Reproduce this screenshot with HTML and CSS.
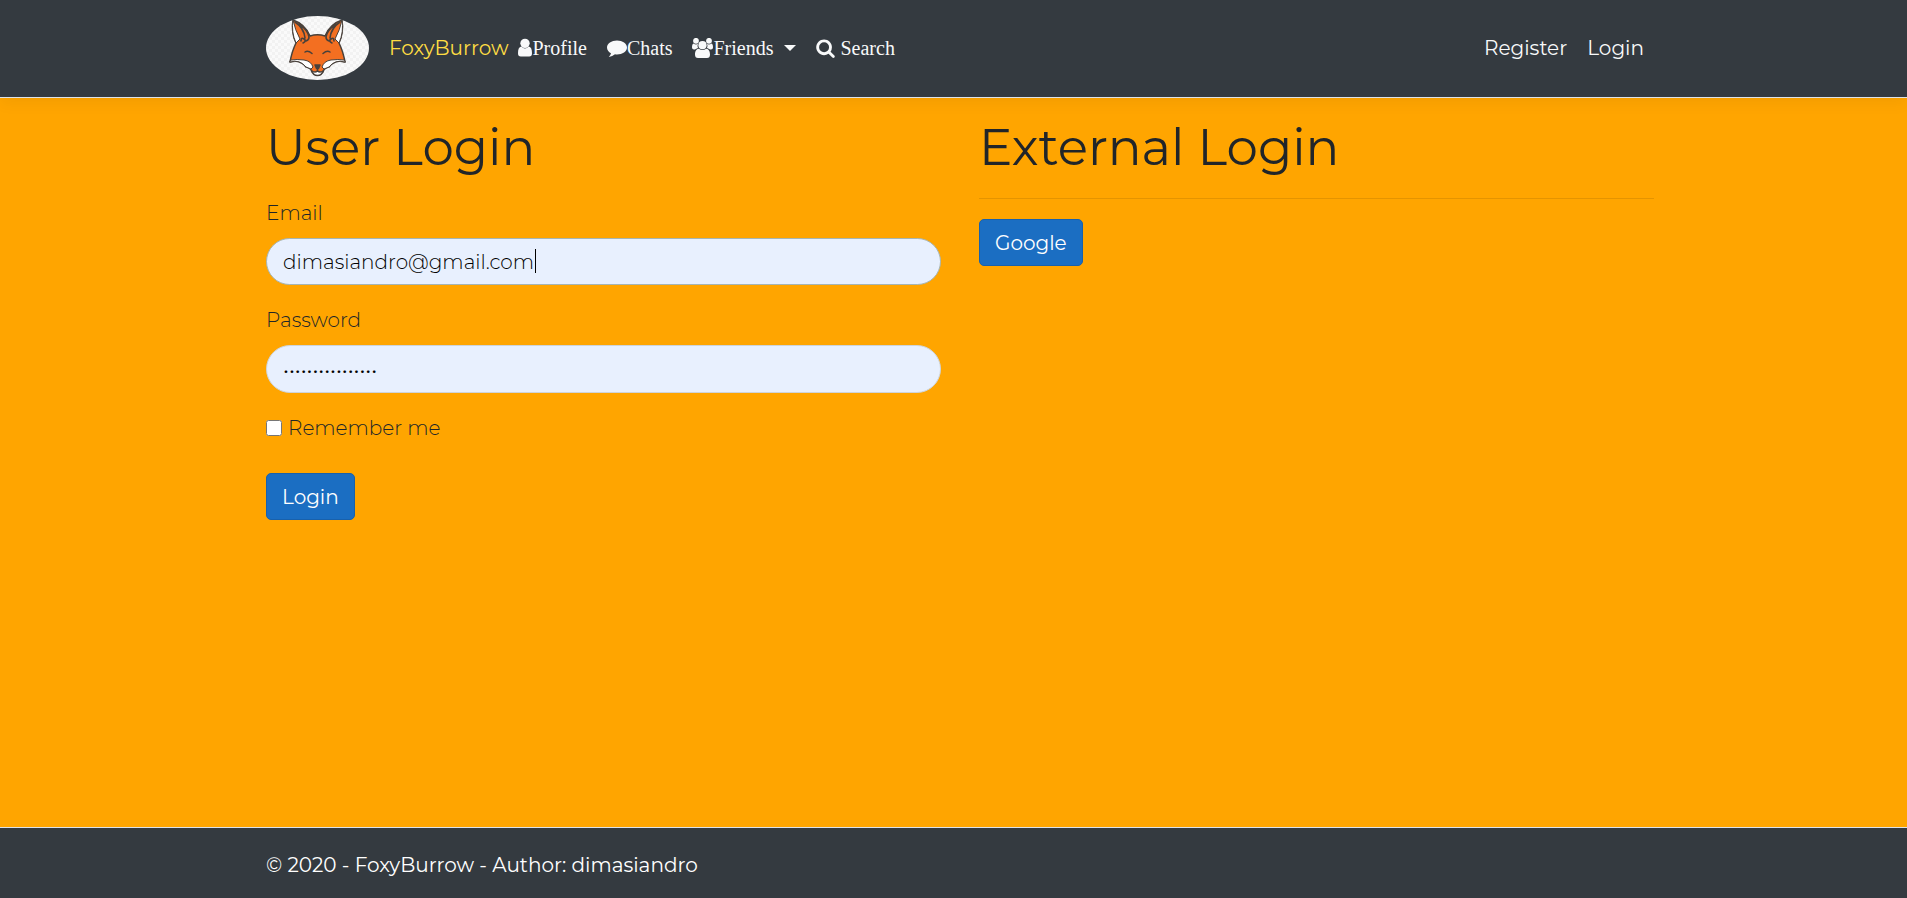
FILE: index.html
```
<!DOCTYPE html>
<html lang="en">
<head>
<meta charset="utf-8">
<meta name="viewport" content="width=device-width, initial-scale=1">
<title>User Login - FoxyBurrow</title>
<link rel="stylesheet" href="styles.css">
</head>
<body>
<header class="header">
  <nav class="container navbar">
    <a class="logo" href="#" aria-label="FoxyBurrow home">
      <svg viewBox="0 0 103 64" width="103" height="64" aria-hidden="true">
        <defs>
          <pattern id="check" width="6" height="6" patternUnits="userSpaceOnUse"><path fill="#fafafa" d="M0 0h6v6H0z"/><path fill="#f2f2f2" d="M0 0h3v3H0zM3 3h3v3H3z"/></pattern>
          <clipPath id="oval"><ellipse cx="51.500" cy="32" rx="51.500" ry="32"/></clipPath>
        </defs>
        <g clip-path="url(#oval)">
          <path fill="url(#check)" d="M0 0h103v64H0z"/>
          <g stroke="#49413b" stroke-width="1.500" stroke-linejoin="round" stroke-linecap="round">
            <path fill="#f36f21" d="M27 4Q25 16 30 27Q26 35 24 46Q34 43 40 51Q45 52 46 56Q51.500 62 57 56Q58 52 63 51Q69 43 79 46Q77 35 73 27Q78 16 76 4Q64 8 59 20Q51.500 17.500 44 20Q39 8 27 4Z"/>
            <path fill="#fff" stroke-width="1" d="M27 4Q25 16 30 27L34 23Q29 14 27 4ZM76 4Q78 16 73 27L69 23Q74 14 76 4Z"/>
            <path fill="#fff" stroke-width="1" d="M24 46Q34 43 40 51L45 53L47 51Q45 45 38 44Q31 43 25 44ZM79 46Q69 43 63 51L58 53L56 51Q58 45 65 44Q72 43 78 44Z"/>
            <path fill="#fff" d="M46 55Q49 57 51.500 55Q54 57 57 55Q56 59.500 51.500 59.500T46 55Z"/>
            <path fill="none" stroke-width="1.600" d="M29 6Q38 12 39 22M33 8Q42 14 43 21M35 25q0-4 3-2t-1 4M43 21q0 3-3 4M74 6Q65 12 64 22M70 8Q61 14 60 21M68 25q0-4-3-2t1 4M60 21q0 3 3 4"/>
            <path fill="none" stroke-width="1.500" d="M39 36Q42 34 46 37.500M57 37.500Q61 34 64 36M51.500 52v3"/>
            <path fill="#49413b" d="M49 49h5l-1.500 3.500h-2z"/>
          </g>
        </g>
      </svg>
    </a>
    <a class="brand" href="#">FoxyBurrow</a>
    <ul class="menu">
      <li><a href="#"><svg viewBox="0 0 15 20" width="14" height="20" aria-hidden="true"><circle cx="7.500" cy="5" r="5"/><path d="M3.500 8.500C1 9 0 11.500 0 15.500Q0 19 3 19H12Q15 19 15 15.500C15 11.500 14 9 11.500 8.500Q7.500 12.500 3.500 8.500Z"/></svg>Profile</a></li>
      <li><a href="#"><svg viewBox="0 0 20 20" width="20" height="20" aria-hidden="true"><path d="M10 2.500C4.500 2.500 0 5.500 0 9.500C0 12 1.500 14 4 15.200Q3.500 17.500 1.800 19Q5.500 18.500 8 16.300Q9 16.500 10 16.500C15.500 16.500 20 13.500 20 9.500S15.500 2.500 10 2.500Z"/></svg>Chats</a></li>
      <li><a class="toggle" href="#" aria-haspopup="true"><svg viewBox="0 0 21 20" width="21" height="20" aria-hidden="true"><circle cx="4" cy="2.800" r="2.900"/><circle cx="17" cy="2.800" r="2.900"/><path d="M1.500 5.500Q4 7.500 6 5.800Q5 8 6 10Q4 10.500 3 11.500H2Q0 11.500 0 9.500Q0 6 1.500 5.500ZM19.500 5.500Q17 7.500 15 5.800Q16 8 15 10Q17 10.500 18 11.500H19Q21 11.500 21 9.500Q21 6 19.500 5.500Z"/><circle cx="10.500" cy="7.200" r="4.100"/><path d="M6.800 10.700C4 11 3 13.500 3 16.500Q3 20 6 20H15Q18 20 18 16.500C18 13.500 17 11 14.200 10.700Q10.500 13.500 6.800 10.700Z"/></svg>Friends<span class="caret"></span></a></li>
      <li><a href="#"><svg viewBox="0 0 1664 1792" width="19" height="20" aria-hidden="true"><path d="M1152 832q0-185-131.500-316.500t-316.500-131.500-316.500 131.500-131.500 316.500 131.500 316.500 316.500 131.500 316.500-131.500 131.500-316.500zm512 832q0 52-38 90t-90 38q-54 0-90-38l-343-342q-179 124-399 124-143 0-273.500-55.500t-225-150-150-225-55.500-273.500 55.500-273.500 150-225 225-150 273.500-55.500 273.500 55.500 225 150 150 225 55.500 273.500q0 220-124 399l343 343q37 37 37 90z"/></svg> Search</a></li>
    </ul>
    <ul class="menu account">
      <li><a href="#">Register</a></li>
      <li><a href="#">Login</a></li>
    </ul>
  </nav>
</header>
<main class="container columns">
  <section>
    <h1>User Login</h1>
    <form class="form">
      <div class="group">
        <label for="email">Email</label>
        <div class="field">
          <input class="control focused" id="email" type="email" value="dimasiandro@gmail.com">
          <span class="cursor"></span>
        </div>
      </div>
      <div class="group">
        <label for="password">Password</label>
        <input class="control secret" id="password" type="password" value="passwordpassword">
      </div>
      <label class="remember"><input type="checkbox"> Remember me</label>
      <button class="btn" type="submit">Login</button>
    </form>
  </section>
  <section>
    <h1>External Login</h1>
    <hr>
    <button class="btn" type="button">Google</button>
  </section>
</main>
<footer class="footer">
  <div class="container">© 2020 - FoxyBurrow - Author: dimasiandro</div>
</footer>
</body>
</html>
```
FILE: styles.css
```
* { box-sizing: border-box; }

body {
  margin: 0;
  min-height: 100vh;
  display: flex;
  flex-direction: column;
  background: #ffa500;
  color: #212529;
  font-family: Montserrat, Inter, sans-serif;
  font-size: 20px;
  font-weight: 300;
  line-height: 30px;
}

.container {
  width: 100%;
  max-width: 1427px;
  margin: 0 auto;
  padding: 0 13px 0 26px;
}

.header {
  background: #343a40;
  border-bottom: 1px solid #dee2e6;
  box-shadow: 0 5px 15px rgba(0, 0, 0, 0.05);
}

.navbar {
  display: flex;
  align-items: center;
  padding-top: 16px;
  padding-bottom: 17px;
}

.logo { margin-right: 20px; }
.logo svg { display: block; }

.brand {
  color: #ffdd43;
  font-weight: 400;
  text-decoration: none;
}

.menu {
  display: flex;
  margin: 0;
  padding: 0;
  list-style: none;
  font-family: "Liberation Serif", serif;
  font-weight: 400;
}

.menu a {
  display: flex;
  align-items: center;
  padding: 0 10px;
  color: #f8f9fa;
  text-decoration: none;
  white-space: pre;
}

.menu svg { fill: currentColor; }

.caret {
  margin-left: 11px;
  border: 6px solid transparent;
  border-top-color: currentColor;
  border-bottom: 0;
}

.account {
  margin-left: auto;
  font-family: Montserrat, Inter, sans-serif;
}

.columns {
  flex: 1;
  display: grid;
  grid-template-columns: 1fr 1fr;
  gap: 38px;
  padding-top: 20px;
}

h1 {
  margin: 0;
  font-size: 50px;
  font-weight: 400;
  line-height: 60px;
}

hr {
  margin: 20px 0;
  border: 0;
  border-top: 1px solid rgba(0, 0, 0, 0.1);
}

.form { padding-top: 20px; }

.group { margin-bottom: 20px; }

.group label {
  display: block;
  margin-bottom: 10px;
}

.field { position: relative; }

.control {
  display: block;
  width: 100%;
  height: 47px;
  padding: 0 16px;
  border: 1px solid #ced4da;
  border-radius: 24px;
  outline: 0;
  background: #e8f0fe;
  color: #000;
  font: inherit;
}

.focused { border-color: #a5b5b5; }

.secret {
  height: 48px;
  font-size: 21px;
}

.cursor {
  position: absolute;
  top: 11px;
  left: 269px;
  width: 1px;
  height: 24px;
  background: #000;
}

.remember {
  display: flex;
  align-items: center;
  gap: 6px;
  margin-bottom: 30px;
}

.remember input {
  width: 16px;
  height: 16px;
  margin: 0;
}

.btn {
  height: 47px;
  padding: 0 15px;
  border: 1px solid #1861ac;
  border-radius: 5px;
  background: #1b6ec2;
  color: #fff;
  font: inherit;
  font-weight: 400;
}

.footer {
  padding: 22px 0 18px;
  border-top: 1px solid #dee2e6;
  background: #343a40;
  color: #fff;
  font-weight: 400;
}
```
